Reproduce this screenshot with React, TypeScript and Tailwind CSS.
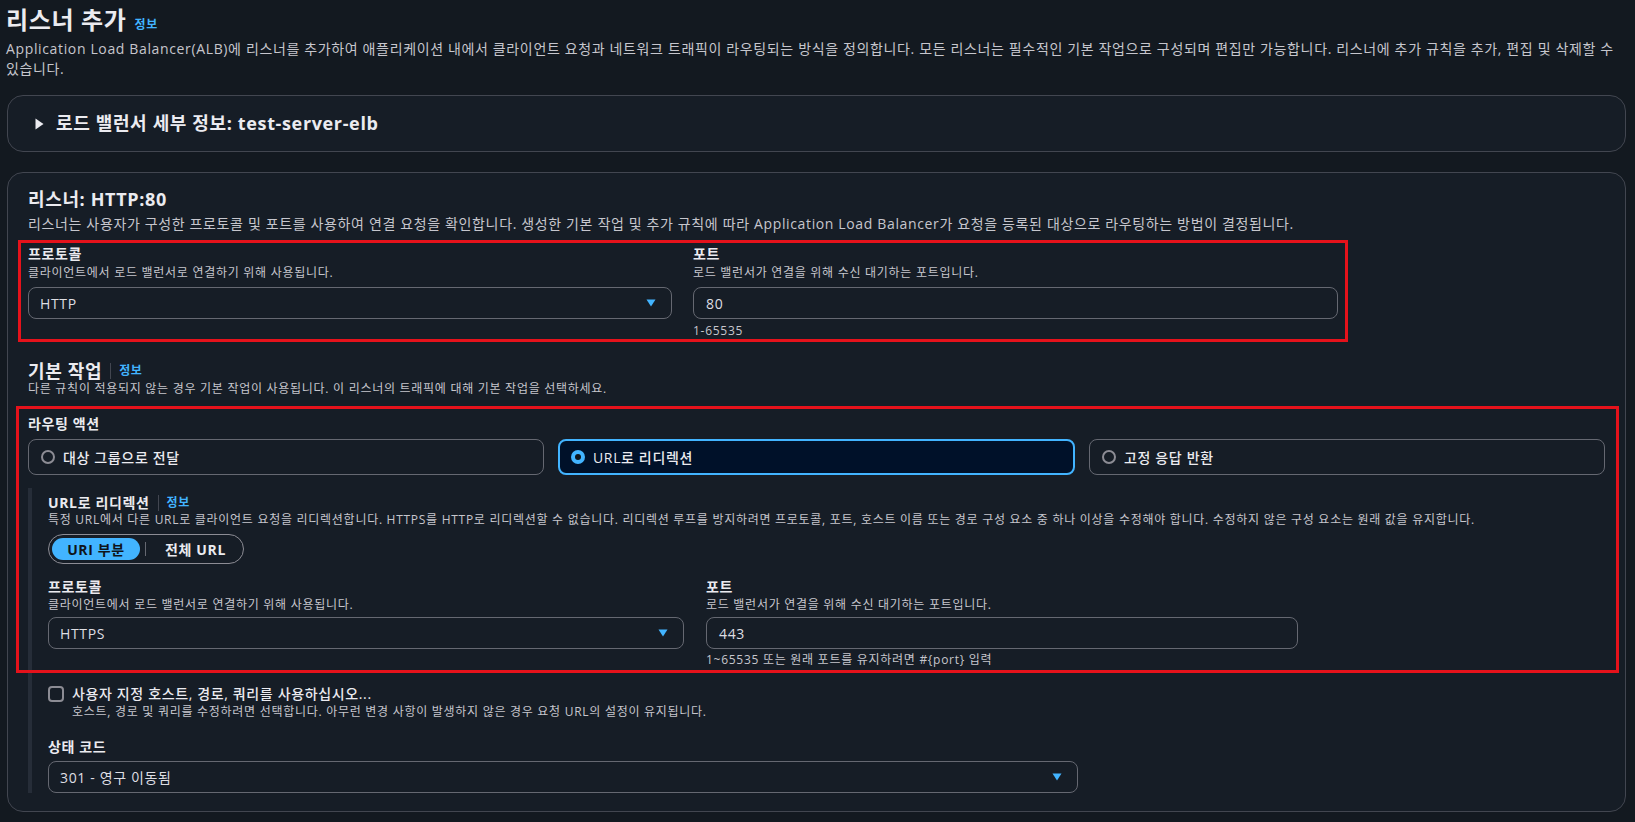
import React from 'react';

const Caret = () => (
  <svg width="10" height="8" viewBox="0 0 10 8" className="shrink-0">
    <path d="M0.5 0.5 H9.5 L5 7.5 Z" fill="#42b4ff" />
  </svg>
);

const Label: React.FC<{ children: React.ReactNode }> = ({ children }) => (
  <div className="text-[14px] leading-[18px] font-bold text-[#ebebf0]">{children}</div>
);

const Desc: React.FC<{ children: React.ReactNode; className?: string }> = ({ children, className = '' }) => (
  <div className={`text-[12px] leading-[16px] tracking-[0.06em] text-[#c6c6cd] ${className}`}>{children}</div>
);

const Select: React.FC<{ value: string; className?: string }> = ({ value, className = '' }) => (
  <div
    className={`h-[32px] rounded-lg border border-[#656871] bg-[#161d26] flex items-center justify-between pl-[11px] pr-[15px] text-[14px] text-[#dedee3] ${className}`}
  >
    <span>{value}</span>
    <Caret />
  </div>
);

const Input: React.FC<{ value: string; className?: string }> = ({ value, className = '' }) => (
  <div
    className={`h-[32px] rounded-lg border border-[#656871] bg-[#161d26] flex items-center pl-[12px] text-[14px] text-[#dedee3] ${className}`}
  >
    {value}
  </div>
);

const Info = () => <a className="text-[12px] font-bold text-[#42b4ff] cursor-pointer">정보</a>;

const RadioTile: React.FC<{ label: string; selected?: boolean }> = ({ label, selected }) => (
  <div
    className={`flex-1 h-[36px] rounded-lg flex items-center gap-2 ${
      selected ? 'border-2 border-[#42b4ff] bg-[#001129] pl-[11px]' : 'border border-[#656871] pl-[12px]'
    }`}
  >
    {selected ? (
      <span className="w-[14px] h-[14px] rounded-full bg-[#42b4ff] flex items-center justify-center">
        <span className="w-[6px] h-[6px] rounded-full bg-[#0f141a]" />
      </span>
    ) : (
      <span className="w-[14px] h-[14px] rounded-full border-2 border-[#8c8c94]" />
    )}
    <span className="text-[14px] text-[#ebebf0] font-medium">{label}</span>
  </div>
);

const App: React.FC = () => {
  return (
    <div className="min-h-screen bg-[#131920] pl-[7px] pr-[9px] pt-[5px] pb-4 tracking-[0.04em] font-['Open_Sans','Noto_Sans_CJK_KR',sans-serif] text-[#c6c6cd]">
      {/* Page header */}
      <div className="flex items-baseline gap-[8px] -ml-px">
        <h1 className="text-[24px] leading-[30px] font-bold text-[#ebebf0]">리스너 추가</h1>
        <Info />
      </div>
      <p className="mt-1 text-[14px] leading-[20px] text-[#c6c6cd] -ml-px">
        Application Load Balancer(ALB)에 리스너를 추가하여 애플리케이션 내에서 클라이언트 요청과 네트워크 트래픽이 라우팅되는 방식을 정의합니다. 모든 리스너는 필수적인 기본 작업으로 구성되며 편집만 가능합니다. 리스너에 추가 규칙을 추가, 편집 및 삭제할 수 있습니다.
      </p>

      {/* Load balancer details (collapsed) */}
      <div className="mt-4 h-[57px] rounded-2xl border border-[#424650] bg-[#161d26] flex items-center pl-[27px] gap-[12px]">
        <svg width="9" height="12" viewBox="0 0 9 12">
          <path d="M0.5 0.5 L8.5 6 L0.5 11.5 Z" fill="#ebebf0" />
        </svg>
        <span className="text-[18px] font-bold text-[#ebebf0]">로드 밸런서 세부 정보: test-server-elb</span>
      </div>

      {/* Listener container */}
      <div className="relative mt-5 rounded-2xl border border-[#424650] bg-[#161d26] px-5 pt-[15px] pb-[18px]">
        <h2 className="text-[18px] leading-[22px] font-bold text-[#ebebf0]">리스너: HTTP:80</h2>
        <p className="mt-1 text-[14px] leading-[20px]">
          리스너는 사용자가 구성한 프로토콜 및 포트를 사용하여 연결 요청을 확인합니다. 생성한 기본 작업 및 추가 규칙에 따라 Application Load Balancer가 요청을 등록된 대상으로 라우팅하는 방법이 결정됩니다.
        </p>

        <div className="mt-[11px] grid grid-cols-[644px_645px] gap-x-[21px]">
          <div>
            <Label>프로토콜</Label>
            <Desc className="mt-[2px]">클라이언트에서 로드 밸런서로 연결하기 위해 사용됩니다.</Desc>
            <Select value="HTTP" className="mt-[6px]" />
          </div>
          <div>
            <Label>포트</Label>
            <Desc className="mt-[2px]">로드 밸런서가 연결을 위해 수신 대기하는 포트입니다.</Desc>
            <Input value="80" className="mt-[6px]" />
            <Desc className="mt-1 text-[#a4a4ad]">1-65535</Desc>
          </div>
        </div>

        {/* Default action */}
        <div className="mt-[22px] flex items-center gap-[8px]">
          <h3 className="text-[18px] leading-[20px] font-bold text-[#ebebf0]">기본 작업</h3>
          <span className="w-px h-[16px] bg-[#424650]" />
          <Info />
        </div>
        <Desc>다른 규칙이 적용되지 않는 경우 기본 작업이 사용됩니다. 이 리스너의 트래픽에 대해 기본 작업을 선택하세요.</Desc>

        <div className="mt-[18px]">
          <Label>라우팅 액션</Label>
        </div>
        <div className="mt-[6px] flex gap-[14px]">
          <RadioTile label="대상 그룹으로 전달" />
          <RadioTile label="URL로 리디렉션" selected />
          <RadioTile label="고정 응답 반환" />
        </div>

        {/* Redirect settings */}
        <div className="mt-[13px] border-l-4 border-[#262d38] pl-4 pt-[6px]">
          <div className="flex items-center gap-[8px]">
            <Label>URL로 리디렉션</Label>
            <span className="w-px h-[16px] bg-[#424650]" />
            <Info />
          </div>
          <Desc>
            특정 URL에서 다른 URL로 클라이언트 요청을 리디렉션합니다. HTTPS를 HTTP로 리디렉션할 수 없습니다. 리디렉션 루프를 방지하려면 프로토콜, 포트, 호스트 이름 또는 경로 구성 요소 중 하나 이상을 수정해야 합니다. 수정하지 않은 구성 요소는 원래 값을 유지합니다.
          </Desc>

          <div className="mt-[6px] inline-flex h-[30px] items-center rounded-full border border-[#8c8c94] p-[3px]">
            <span className="h-[22px] w-[88px] rounded-full bg-[#42b4ff] flex items-center justify-center text-[14px] font-bold text-[#0f141a]">
              URI 부분
            </span>
            <span className="mx-[5px] w-px h-[14px] bg-[#656871]" />
            <span className="px-[14px] text-[14px] font-bold text-[#ebebf0]">전체 URL</span>
          </div>

          <div className="mt-[14px] grid grid-cols-[636px_592px] gap-x-[22px]">
            <div>
              <Label>프로토콜</Label>
              <Desc className="mt-px">클라이언트에서 로드 밸런서로 연결하기 위해 사용됩니다.</Desc>
              <Select value="HTTPS" className="mt-1" />
            </div>
            <div>
              <Label>포트</Label>
              <Desc className="mt-px">로드 밸런서가 연결을 위해 수신 대기하는 포트입니다.</Desc>
              <Input value="443" className="mt-1" />
              <Desc className="mt-[3px] text-[#a4a4ad]">1~65535 또는 원래 포트를 유지하려면 #{'{'}port{'}'} 입력</Desc>
            </div>
          </div>

          <div className="mt-[16px] flex gap-2">
            <span className="mt-[2px] w-[16px] h-[16px] rounded-[4px] border-2 border-[#8c8c94] shrink-0" />
            <div>
              <div className="text-[14px] leading-[20px] font-medium text-[#ebebf0]">사용자 지정 호스트, 경로, 쿼리를 사용하십시오...</div>
              <Desc>호스트, 경로 및 쿼리를 수정하려면 선택합니다. 아무런 변경 사항이 발생하지 않은 경우 요청 URL의 설정이 유지됩니다.</Desc>
            </div>
          </div>

          <div className="mt-[18px]">
            <Label>상태 코드</Label>
          </div>
          <Select value="301 - 영구 이동됨" className="mt-[5px] w-[1030px]" />
        </div>

        {/* Annotation boxes */}
        <div className="pointer-events-none absolute left-[10px] top-[67px] w-[1330px] h-[102px] border-[3px] border-[#e5121b]" />
        <div className="pointer-events-none absolute left-[8px] top-[233px] w-[1603px] h-[267px] border-[3px] border-[#e5121b]" />
      </div>
    </div>
  );
};

export default App;
